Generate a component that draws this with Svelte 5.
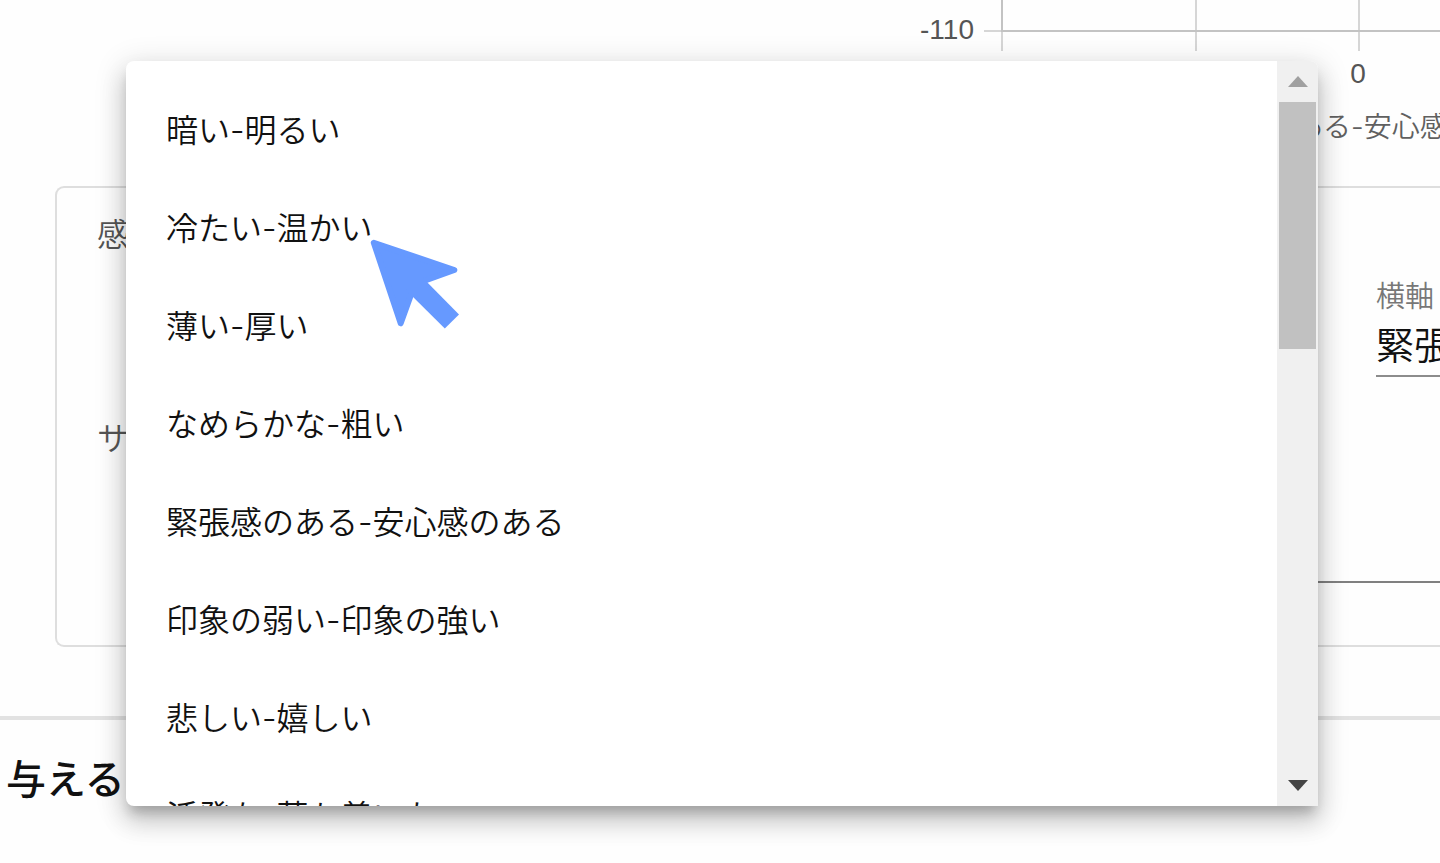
<script>
  const options = [
    '暗い-明るい',
    '冷たい-温かい',
    '薄い-厚い',
    'なめらかな-粗い',
    '緊張感のある-安心感のある',
    '印象の弱い-印象の強い',
    '悲しい-嬉しい',
    '活発な-落ち着いた'
  ];

  let list;

  function scrollList(amount) {
    list.scrollBy({ top: amount });
  }
</script>

<main class="page">
  <figure class="chart">
    <svg width="540" height="186" viewBox="0 0 540 186">
      <g fill="none" stroke="#d6d6d6" stroke-width="2">
        <path d="M84 31H102M102 31V51M296 0V51M459 0V51" />
        <path d="M102 0V31H540" stroke="#c3c3c3" />
      </g>
      <g class="ticks">
        <text x="74" y="39" text-anchor="end">-110</text>
        <text x="458" y="83" text-anchor="middle">0</text>
      </g>
      <text class="axis" x="395" y="137">ある-安心感</text>
    </svg>
  </figure>

  <section class="panel">
    <div class="row">
      <span class="name">感</span>
      <div class="field">
        <label for="axis-x">横軸</label>
        <select id="axis-x">
          <option>緊張</option>
        </select>
      </div>
    </div>
    <div class="row second">
      <label class="name" for="sample">サ</label>
      <input id="sample" type="text" />
    </div>
  </section>

  <hr />
  <h2>与える</h2>

  <div class="popup">
    <ul class="options" bind:this={list}>
      {#each options as option}
        <li><button type="button">{option}</button></li>
      {/each}
    </ul>
    <div class="scrollbar">
      <button type="button" aria-label="上へ" onclick={() => scrollList(-98)}>
        <svg width="20" height="11" viewBox="0 0 20 11"><path d="M0 11L10 0L20 11Z" fill="#a0a0a0" /></svg>
      </button>
      <div class="track"><div class="thumb"></div></div>
      <button type="button" aria-label="下へ" onclick={() => scrollList(98)}>
        <svg width="20" height="11" viewBox="0 0 20 11"><path d="M0 0L10 11L20 0Z" fill="#444" /></svg>
      </button>
    </div>
  </div>

  <svg class="pointer" width="90" height="90" viewBox="0 0 90 90" aria-hidden="true">
    <path
      d="M3.8 3.8L84.3 31L51 43L42.5 51.5L30.7 84.3Z"
      fill="#6699ff"
      stroke="#6699ff"
      stroke-width="6"
      stroke-linejoin="round"
    />
    <path d="M50 36L89 75.5L74.8 89.5L36 51Z" fill="#6699ff" />
  </svg>
</main>

<style>
  :global(body) {
    margin: 0;
    background: #fefefe;
  }

  .page {
    position: relative;
    min-height: 100vh;
    overflow: hidden;
    font-family: Inter, 'Noto Sans CJK JP', sans-serif;
    color: #111;
  }

  .chart {
    display: flex;
    justify-content: flex-end;
    margin: 0;
  }

  .chart svg {
    display: block;
  }

  .ticks {
    font-family: 'Liberation Sans', sans-serif;
    font-size: 28px;
    fill: #555;
  }

  .axis {
    font-size: 28px;
    font-weight: 350;
    fill: #606060;
  }

  .panel {
    box-sizing: border-box;
    min-height: 461px;
    margin-left: 55px;
    padding: 25px 0 0 40px;
    border: 2px solid #dedede;
    border-right: 0;
    border-radius: 9px 0 0 9px;
  }

  .row {
    display: flex;
    justify-content: space-between;
  }

  .name {
    font-size: 32px;
    line-height: 44px;
    font-weight: 350;
    color: #555;
  }

  .field {
    width: 64px;
    margin-top: 62px;
  }

  .field label {
    display: block;
    font-size: 29px;
    line-height: 44px;
    font-weight: 350;
    color: #777;
    white-space: nowrap;
  }

  select {
    box-sizing: border-box;
    display: block;
    width: 100%;
    height: 58px;
    margin: 0;
    padding: 0 0 4px;
    border: 0;
    border-bottom: 2px solid #8c8c8c;
    border-radius: 0;
    background: transparent;
    appearance: none;
    font: 350 38px Inter, 'Noto Sans CJK JP', sans-serif;
    color: #111;
    text-overflow: clip;
  }

  .second {
    margin-top: 40px;
  }

  .second input {
    box-sizing: border-box;
    flex: 1;
    height: 166px;
    padding: 0;
    border: 0;
    border-bottom: 2px solid #808080;
    background: transparent;
    font-size: 32px;
  }

  hr {
    height: 4px;
    margin: 69px 0 0;
    border: 0;
    background: #e2e2e2;
  }

  h2 {
    margin: 32px 0 0 6px;
    font-size: 40px;
    line-height: 56px;
    font-weight: 500;
  }

  .popup {
    position: absolute;
    inset: 61px 122px 57px 126px;
    display: flex;
    overflow: hidden;
    border-radius: 8px 8px 0 8px;
    background: #fff;
    box-shadow:
      0 10px 12px -4px rgba(0, 0, 0, 0.2),
      0 16px 24px 2px rgba(0, 0, 0, 0.14),
      0 6px 30px 4px rgba(0, 0, 0, 0.12);
  }

  .options {
    flex: 1;
    margin: 0;
    padding: 18px 0;
    overflow: hidden;
    list-style: none;
  }

  .options button {
    display: block;
    width: 100%;
    height: 98px;
    padding: 0 40px;
    border: 0;
    background: transparent;
    font: 350 32px Inter, 'Noto Sans CJK JP', sans-serif;
    color: #111;
    text-align: left;
  }

  .scrollbar {
    display: flex;
    flex-direction: column;
    width: 41px;
    background: #f0f0f0;
  }

  .scrollbar button {
    display: flex;
    align-items: center;
    justify-content: center;
    height: 41px;
    padding: 0;
    border: 0;
    background: transparent;
  }

  .track {
    flex: 1;
    padding: 0 2px;
  }

  .thumb {
    height: 247px;
    background: #c1c1c1;
  }

  .pointer {
    position: absolute;
    left: 370px;
    top: 239px;
  }
</style>
